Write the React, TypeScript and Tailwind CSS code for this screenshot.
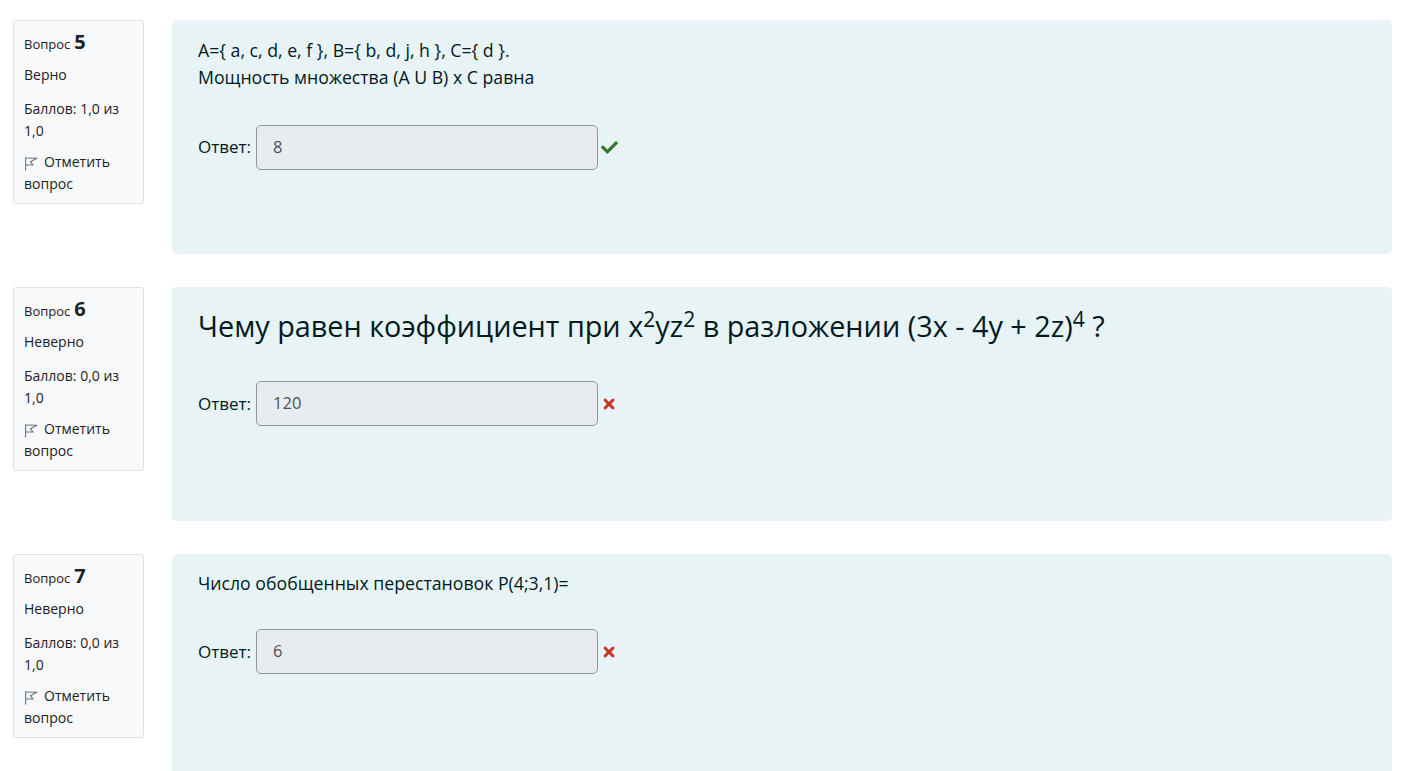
import { FaCheck, FaTimes } from "react-icons/fa";

type Q = {
    num: number;
    state: string;
    mark: string;
    correct: boolean;
    answer: string;
    body: React.ReactNode;
};

const questions: Q[] = [
    {
        num: 5,
        state: "Верно",
        mark: "1,0",
        correct: true,
        answer: "8",
        body: (
            <div className="text-[17.7px] leading-[27px] pt-[16.5px]">
                <div>A={"{"} a, c, d, e, f {"}"}, B={"{"} b, d, j, h {"}"}, C={"{"} d {"}"}.</div>
                <div>Мощность множества (A U B) x C равна</div>
            </div>
        ),
    },
    {
        num: 6,
        state: "Неверно",
        mark: "0,0",
        correct: false,
        answer: "120",
        body: (
            <div className="text-[28.8px] leading-[36px] pt-[21px]">
                Чему равен коэффициент при x<sup className="text-[21px]">2</sup>yz<sup className="text-[21px]">2</sup> в разложении (3x - 4y + 2z)<sup className="text-[21px]">4</sup> ?
            </div>
        ),
    },
    {
        num: 7,
        state: "Неверно",
        mark: "0,0",
        correct: false,
        answer: "6",
        body: <div className="text-[17.7px] leading-[27px] pt-[16px]">Число обобщенных перестановок P(4;3,1)=</div>,
    },
];

function FlagIcon() {
    return (
        <svg width="14" height="14" viewBox="0 0 13 13" fill="none" stroke="#6a737b" strokeWidth="1" className="mr-[6px] mt-[1px]">
            <path d="M1.5 0.5 V12.5" />
            <path d="M1.5 1 L12 1.2 L6 4.5 L8.5 7.5 L1.5 7.5" strokeLinejoin="round" />
        </svg>
    );
}

function Question({ q }: { q: Q }) {
    const answerGap = q.num === 5 ? "mt-[34px]" : q.num === 6 ? "mt-[37px]" : "mt-[32px]";
    return (
        <div className="flex items-start">
            <div className="w-[131px] shrink-0 bg-[#f8f9fa] border border-[#dee2e6] rounded-[3px] px-[10px] pt-[10px] pb-[8px] text-[14px] leading-[22px] text-[#1d2125]">
                <div className="flex items-baseline">
                    <span className="text-[13px] text-[#1d2125]">Вопрос</span>
                    <span className="ml-[4px] text-[20px] font-bold">{q.num}</span>
                </div>
                <div className="mt-[9px]">{q.state}</div>
                <div className="mt-[12px]">Баллов: {q.mark} из 1,0</div>
                <div className="mt-[9px]">
                    <span className="inline-flex items-center align-middle"><FlagIcon /></span>Отметить вопрос
                </div>
            </div>
            <div className="ml-[28px] flex-1 h-[234px] bg-[#e7f3f5] rounded-[5px] pl-[26px] pr-6 text-[#001a1e]">
                {q.body}
                <div className={`flex items-center ${answerGap}`}>
                    <span className="text-[17px] mr-[5px]">Ответ:</span>
                    <div className="w-[342px] h-[45px] bg-[#e9ecef] border border-[#8f959e] rounded-[5px] flex items-center px-[16px] text-[16.5px] text-[#495057]">
                        {q.answer}
                    </div>
                    {q.correct ? (
                        <FaCheck className="ml-[3px] text-[#357a32]" size={17} />
                    ) : (
                        <FaTimes className="ml-[3px] text-[#ca3120]" size={16} />
                    )}
                </div>
            </div>
        </div>
    );
}

export default function App() {
    return (
        <div className="min-h-screen bg-white pl-[13px] pr-[13px] pt-[20px] flex flex-col gap-[33px]" style={{ fontFamily: '"Open Sans", "Noto Sans", sans-serif' }}>
            {questions.map((q) => (
                <Question key={q.num} q={q} />
            ))}
        </div>
    );
}
